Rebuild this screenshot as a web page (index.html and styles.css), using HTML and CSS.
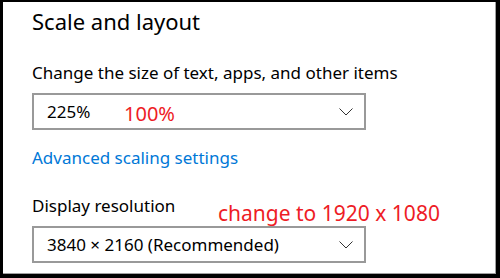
FILE: index.html
```html
<!DOCTYPE html>
<html lang="en">

<head>
    <title>Display settings</title>
    <meta charset="UTF-8" />
    <meta name="viewport" content="width=device-width, initial-scale=1.0" />
    <link rel="stylesheet" href="styles.css">
</head>

<body>
    <div class="screen">
        <section class="panel">
            <h1 class="heading">Scale and layout</h1>
            <div class="field">
                <label class="label" for="scaleSelect">Change the size of text, apps, and other items</label>
                <div class="dropdown" id="scaleSelect">
                    <span class="value">225%</span>
                    <svg class="chevron" width="14" height="8" viewBox="0 0 14 8">
                        <path d="M0.5 0.5 L7 7 L13.5 0.5" fill="none" stroke="#333" stroke-width="1" />
                    </svg>
                    <span class="note note-scale">100%</span>
                </div>
            </div>
            <a class="link" href="#">Advanced scaling settings</a>
            <div class="field field-res">
                <label class="label" for="resolutionSelect">Display resolution</label>
                <div class="dropdown" id="resolutionSelect">
                    <span class="value">3840 × 2160 (Recommended)</span>
                    <svg class="chevron" width="14" height="8" viewBox="0 0 14 8">
                        <path d="M0.5 0.5 L7 7 L13.5 0.5" fill="none" stroke="#333" stroke-width="1" />
                    </svg>
                </div>
                <span class="note note-res">change to 1920 x 1080</span>
            </div>
        </section>
    </div>
</body>

</html>
```

FILE: styles.css
```css
html,
body {
    margin: 0;
    padding: 0;
}

body {
    font-family: 'Noto Sans', 'Open Sans', sans-serif;
    color: #000;
}

.screen {
    width: 500px;
    height: 278px;
    box-sizing: border-box;
    background-color: #000;
    padding: 2px 4px 4px 3px;
}

.panel {
    position: relative;
    height: 100%;
    box-sizing: border-box;
    background-color: #fff;
    border-right: 1px solid #a0a0a0;
    border-bottom: 1px solid #a0a0a0;
    padding: 4px 0 0 29px;
}

.heading {
    margin: 0;
    font-size: 22px;
    font-weight: normal;
    line-height: 30px;
}

.field {
    position: relative;
    margin-top: 27px;
}

.label {
    display: block;
    font-size: 17px;
    line-height: 20px;
}

.dropdown {
    position: relative;
    display: flex;
    align-items: center;
    justify-content: space-between;
    width: 334px;
    height: 37px;
    box-sizing: border-box;
    margin-top: 10px;
    padding: 0 11px 0 13px;
    border: 2px solid #999;
}

.value {
    font-size: 17px;
}

.chevron {
    display: block;
}

.link {
    display: block;
    margin-top: 18px;
    font-size: 17px;
    line-height: 20px;
    color: #0078d7;
    text-decoration: none;
}

.field-res {
    margin-top: 28px;
}

/* red annotations drawn over the screenshot */
.note {
    position: absolute;
    color: #ee1c25;
    white-space: nowrap;
}

.note-scale {
    left: 90px;
    top: 5px;
    font-size: 20px;
}

.note-res {
    left: 186px;
    top: 3px;
    font-size: 21px;
}
```
